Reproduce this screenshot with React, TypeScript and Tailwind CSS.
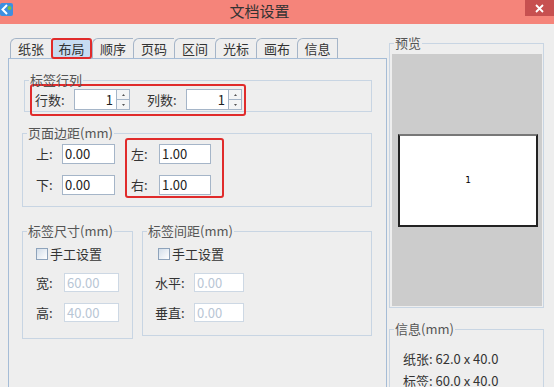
import React from "react";

const tabs = ["纸张", "布局", "顺序", "页码", "区间", "光标", "画布", "信息"];

function Group({
    title,
    className,
    inner,
    children,
}: {
    title: string;
    className?: string;
    inner?: string;
    children?: React.ReactNode;
}) {
    return (
        <fieldset className={`border border-[#c8d5e3] ${className ?? ""}`}>
            <legend className="ml-[4px] px-[1px] text-[13px] leading-[16px] text-[#555]">{title}</legend>
            <div className={inner}>{children}</div>
        </fieldset>
    );
}

function Field({
    label,
    value,
    labelW,
    inputW,
    h = "h-[20px]",
    disabled,
}: {
    label: string;
    value: string;
    labelW: string;
    inputW: string;
    h?: string;
    disabled?: boolean;
}) {
    return (
        <div className="flex items-center">
            <span className={`${labelW} text-[13px] leading-[16px] text-[#333]`}>{label}</span>
            <div
                className={`${inputW} ${h} flex items-center bg-white pl-[2px] text-[13px] leading-[16px] ${
                    disabled ? "border border-[#cdd8e4] text-[#b8c6d5]" : "border border-[#a5b5c8] text-[#222]"
                }`}
            >
                {value}
            </div>
        </div>
    );
}

function Spin({ value }: { value: string }) {
    return (
        <div className="flex h-[21px]">
            <div className="w-[43px] h-full border border-[#a5b5c8] bg-white flex items-center justify-end pr-[3px] text-[13px] text-[#222]">
                {value}
            </div>
            <div className="w-[13px] h-full flex flex-col border border-l-0 border-[#a5b5c8] bg-[#f4f5f6]">
                <div className="flex-1 flex items-center justify-center border-b border-[#a5b5c8]">
                    <svg width="3" height="2" viewBox="0 0 3 2">
                        <path d="M1.5 0 L3 2 L0 2 Z" fill="#555" />
                    </svg>
                </div>
                <div className="flex-1 flex items-center justify-center">
                    <svg width="3" height="2" viewBox="0 0 3 2">
                        <path d="M0 0 L3 0 L1.5 2 Z" fill="#555" />
                    </svg>
                </div>
            </div>
        </div>
    );
}

function Check({ label }: { label: string }) {
    return (
        <div className="flex items-center h-[12px]">
            <div className="w-[12px] h-[12px] border border-[#8ea3bb] bg-gradient-to-br from-[#d3deea] to-white" />
            <span className="ml-[2px] text-[13px] leading-[16px] text-[#333]">{label}</span>
        </div>
    );
}

export default function App() {
    return (
        <div className="w-[554px] h-[387px] overflow-hidden bg-[#eeeeee] flex flex-col font-['Noto_Sans_CJK_SC','Noto_Sans',sans-serif]">
            {/* Title bar */}
            <div className="h-[24px] shrink-0 bg-[#f5847a] flex items-start">
                <div className="w-[14px] pt-[3px]">
                    <svg width="13" height="13" viewBox="0 0 13 13">
                        <rect x="0" y="0" width="13" height="13" rx="2" fill="#3d8fe0" />
                        <path d="M7 2 L2.5 6.5 L7 11" stroke="#fff" strokeWidth="2" fill="none" />
                        <circle cx="9.5" cy="5" r="2" fill="#7cc043" />
                    </svg>
                </div>
                <div className="flex-1 text-center pr-[20px] text-[15px] leading-[22px] text-[#333]">文档设置</div>
                <div className="w-[29px] h-[16px] bg-[#c75050] flex items-center justify-center">
                    <svg width="9" height="9" viewBox="0 0 9 9">
                        <path d="M1 1 L8 8 M8 1 L1 8" stroke="#fff" strokeWidth="1.8" />
                    </svg>
                </div>
            </div>

            <div className="flex flex-1">
                {/* Left: tabs + panel */}
                <div className="ml-[8px] w-[379px] pt-[14px] flex flex-col">
                    <div className="h-[20px] pl-[2px] flex items-start">
                        {tabs.map((t, i) =>
                            i === 1 ? (
                                <div
                                    key={t}
                                    className="relative z-10 w-[41px] h-[21px] border-2 border-[#e02b2b] rounded-[3px] bg-[#c6dcf2] flex items-center justify-center text-[13px] text-[#333]"
                                >
                                    {t}
                                </div>
                            ) : (
                                <div
                                    key={t}
                                    className={`w-[41px] h-[20px] border-t border-l border-[#a5b5c8] rounded-tl-[6px] flex items-center justify-center text-[13px] text-[#333] ${
                                        i === tabs.length - 1 ? "border-r" : ""
                                    }`}
                                >
                                    {t}
                                </div>
                            )
                        )}
                    </div>

                    <div className="h-[340px] shrink-0 border border-[#a5bcd6] pl-[13px] pr-[14px] pt-[13px]">
                        {/* 标签行列 */}
                        <Group title="标签行列" className="ml-[2px]">
                            <div className="ml-[5px] mt-[-4px] mb-[-5px] w-[216px] border-2 border-[#e02b2b] rounded-[3px] pl-[3px] pt-[3px] pb-[4px] flex items-center">
                                <span className="w-[39px] text-[13px] leading-[16px] text-[#333]">行数:</span>
                                <Spin value="1" />
                                <span className="ml-[17px] w-[39px] text-[13px] leading-[16px] text-[#333]">列数:</span>
                                <Spin value="1" />
                            </div>
                        </Group>

                        {/* 页面边距 */}
                        <Group title="页面边距(mm)" className="mt-[13px]" inner="pl-[13px] pb-[8px] flex items-start">
                            <div className="mt-[3px] flex flex-col gap-[11px]">
                                <Field label="上:" value="0.00" labelW="w-[26px]" inputW="w-[53px]" />
                                <Field label="下:" value="0.00" labelW="w-[26px]" inputW="w-[53px]" />
                            </div>
                            <div className="ml-[10px] mt-[-3px] border-2 border-[#e02b2b] rounded-[3px] pl-[4px] pr-[11px] pt-[4px] pb-[1px] flex flex-col gap-[11px]">
                                <Field label="左:" value="1.00" labelW="w-[28px]" inputW="w-[52px]" />
                                <Field label="右:" value="1.00" labelW="w-[28px]" inputW="w-[52px]" />
                            </div>
                        </Group>

                        {/* 尺寸 / 间距 */}
                        <div className="mt-[16px] flex items-start gap-[9px]">
                            <Group title="标签尺寸(mm)" className="w-[111px]" inner="pl-[13px] pb-[16px]">
                                <div className="mt-[9px]">
                                    <Check label="手工设置" />
                                </div>
                                <div className="mt-[13px] flex flex-col gap-[11px]">
                                    <Field label="宽:" value="60.00" labelW="w-[28px]" inputW="w-[55px]" h="h-[19px]" disabled />
                                    <Field label="高:" value="40.00" labelW="w-[28px]" inputW="w-[55px]" h="h-[19px]" disabled />
                                </div>
                            </Group>
                            <Group title="标签间距(mm)" className="w-[230px]" inner="pl-[12px] pb-[13px]">
                                <div className="mt-[9px] pl-[3px]">
                                    <Check label="手工设置" />
                                </div>
                                <div className="mt-[13px] flex flex-col gap-[11px]">
                                    <Field label="水平:" value="0.00" labelW="w-[39px]" inputW="w-[50px]" h="h-[19px]" disabled />
                                    <Field label="垂直:" value="0.00" labelW="w-[39px]" inputW="w-[50px]" h="h-[19px]" disabled />
                                </div>
                            </Group>
                        </div>
                    </div>
                </div>

                {/* Right: preview + info */}
                <div className="ml-[2px] w-[155px] pt-[11px] flex flex-col">
                    <Group title="预览" inner="pb-[1px]">
                        <div className="ml-[2px] mr-[1px] mt-[3px] h-[252px] bg-[#cccccc] flex items-center justify-center">
                            <div className="ml-[2px] w-[140px] h-[93px] bg-white border-2 border-[#222] border-t-[#777] flex items-center justify-center text-[9px] leading-[10px] text-black font-['DejaVu_Sans',sans-serif]">
                                1
                            </div>
                        </div>
                    </Group>
                    <Group title="信息(mm)" className="mt-[13px]" inner="pl-[13px] pb-[20px]">
                        <div className="mt-[14px] flex flex-col gap-[6px] text-[13px] leading-[16px] text-[#333]">
                            <span>纸张: 62.0 x 40.0</span>
                            <span>标签: 60.0 x 40.0</span>
                        </div>
                    </Group>
                </div>
            </div>
        </div>
    );
}
